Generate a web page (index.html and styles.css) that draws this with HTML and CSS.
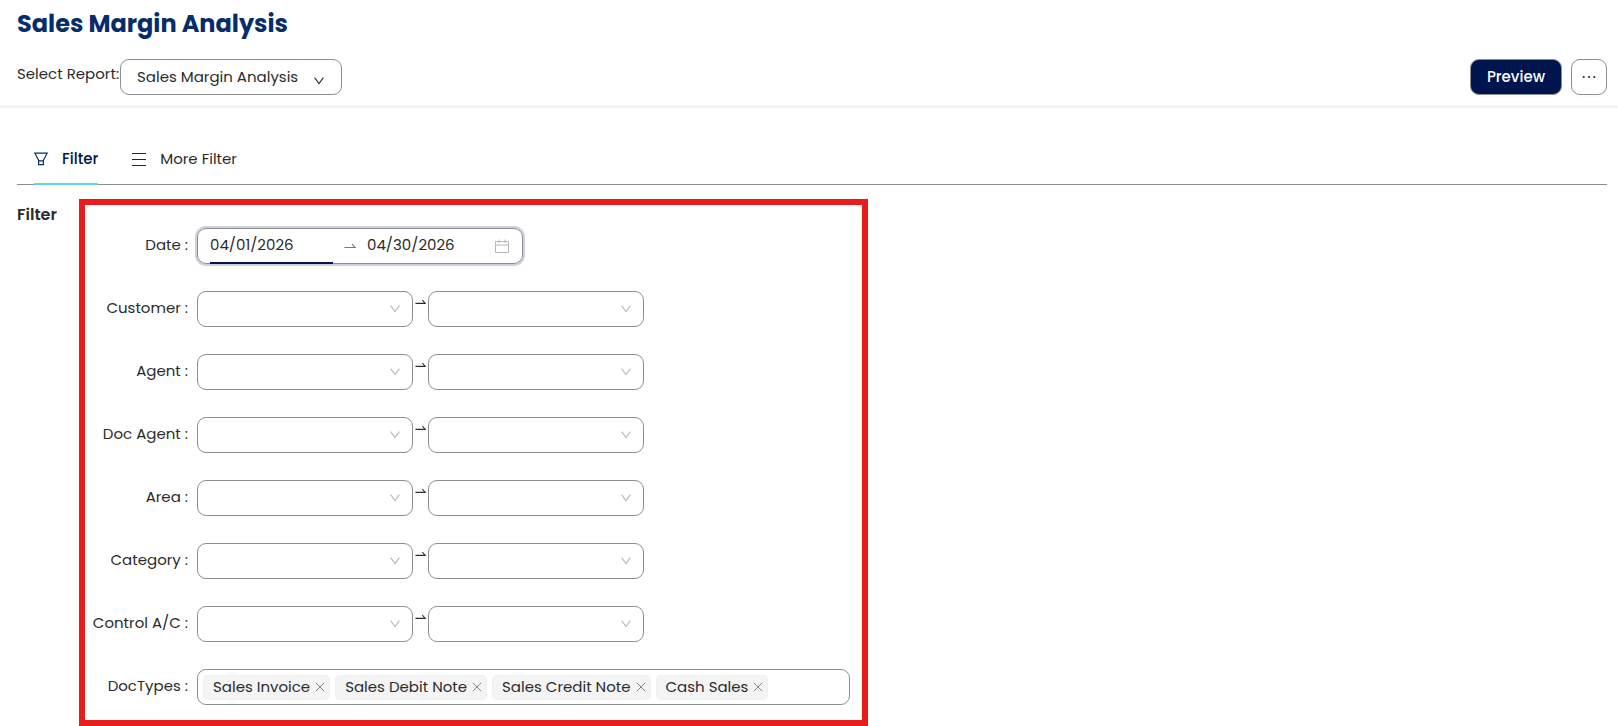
FILE: index.html
```html
<!DOCTYPE html>
<html lang="en">
<head>
<meta charset="utf-8">
<meta name="viewport" content="width=device-width, initial-scale=1">
<title>Sales Margin Analysis</title>
<link rel="stylesheet" href="styles.css">
</head>
<body>
<svg class="symbols" aria-hidden="true">
  <symbol id="chevron" viewBox="0 0 10 8"><path d="M.6.6 5 6.6 9.400.6" fill="none" stroke="currentColor" stroke-width="1.100"/></symbol>
  <symbol id="arrow" viewBox="0 0 12 6"><path d="M.5 4.500H11.200L8 1" fill="none" stroke="currentColor" stroke-width="1.100"/></symbol>
  <symbol id="cross" viewBox="0 0 10 10"><path d="M.8.8 9.200 9.200M9.200.8.8 9.200" fill="none" stroke="currentColor"/></symbol>
</svg>
<header class="header">
  <h1 class="title">Sales Margin Analysis</h1>
  <div class="toolbar">
    <label class="toolbar-label" for="report">Select Report:</label>
    <span class="select report">
      <select id="report"><option>Sales Margin Analysis</option></select>
      <svg class="chevron"><use href="#chevron"/></svg>
    </span>
    <div class="actions">
      <button class="btn btn-primary" type="button">Preview</button>
      <button class="btn btn-more" type="button" aria-label="More actions">
        <svg width="14" height="4" viewBox="0 0 14 4" fill="currentColor"><circle cx="1.700" cy="2" r="1.100"/><circle cx="7" cy="2" r="1.100"/><circle cx="12.300" cy="2" r="1.100"/></svg>
      </button>
    </div>
  </div>
</header>
<main class="main">
  <nav class="tabs">
    <a class="tab tab-active" href="#filter">
      <svg width="14" height="14" viewBox="0 0 14 14" fill="none" stroke="currentColor" stroke-width="1.200"><path d="M.9 1.200H13.100L9.400 8.300V12.700H4.600V8.300ZM4.600 8.900H9.400"/></svg>
      Filter
    </a>
    <a class="tab" href="#more">
      <svg width="14" height="14" viewBox="0 0 14 14" stroke="currentColor" stroke-width="1.200"><path d="M0 1.500H14M0 7.500H14M0 13.500H14"/></svg>
      More Filter
    </a>
  </nav>
  <section class="section" id="filter">
    <h2 class="section-title">Filter</h2>
    <form class="form">
      <div class="row">
        <label class="label" for="date-from">Date :</label>
        <div class="range">
          <input class="range-input range-active" id="date-from" type="text" value="04/01/2026">
          <svg class="arrow"><use href="#arrow"/></svg>
          <input class="range-input" type="text" value="04/30/2026" aria-label="Date to">
          <svg class="calendar" viewBox="0 0 14 14" fill="none" stroke="currentColor"><path d="M.5 2.500H13.500V13.500H.5ZM.5 6H13.500M4 .5V4M10 .5V4"/></svg>
        </div>
      </div>
      <div class="row">
        <label class="label" for="customer">Customer :</label>
        <div class="pair">
          <span class="select"><select id="customer"><option></option></select><svg class="chevron"><use href="#chevron"/></svg></span>
          <svg class="arrow"><use href="#arrow"/></svg>
          <span class="select"><select aria-label="Customer to"><option></option></select><svg class="chevron"><use href="#chevron"/></svg></span>
        </div>
      </div>
      <div class="row">
        <label class="label" for="agent">Agent :</label>
        <div class="pair">
          <span class="select"><select id="agent"><option></option></select><svg class="chevron"><use href="#chevron"/></svg></span>
          <svg class="arrow"><use href="#arrow"/></svg>
          <span class="select"><select aria-label="Agent to"><option></option></select><svg class="chevron"><use href="#chevron"/></svg></span>
        </div>
      </div>
      <div class="row">
        <label class="label" for="doc-agent">Doc Agent :</label>
        <div class="pair">
          <span class="select"><select id="doc-agent"><option></option></select><svg class="chevron"><use href="#chevron"/></svg></span>
          <svg class="arrow"><use href="#arrow"/></svg>
          <span class="select"><select aria-label="Doc Agent to"><option></option></select><svg class="chevron"><use href="#chevron"/></svg></span>
        </div>
      </div>
      <div class="row">
        <label class="label" for="area">Area :</label>
        <div class="pair">
          <span class="select"><select id="area"><option></option></select><svg class="chevron"><use href="#chevron"/></svg></span>
          <svg class="arrow"><use href="#arrow"/></svg>
          <span class="select"><select aria-label="Area to"><option></option></select><svg class="chevron"><use href="#chevron"/></svg></span>
        </div>
      </div>
      <div class="row">
        <label class="label" for="category">Category :</label>
        <div class="pair">
          <span class="select"><select id="category"><option></option></select><svg class="chevron"><use href="#chevron"/></svg></span>
          <svg class="arrow"><use href="#arrow"/></svg>
          <span class="select"><select aria-label="Category to"><option></option></select><svg class="chevron"><use href="#chevron"/></svg></span>
        </div>
      </div>
      <div class="row">
        <label class="label" for="control">Control A/C :</label>
        <div class="pair">
          <span class="select"><select id="control"><option></option></select><svg class="chevron"><use href="#chevron"/></svg></span>
          <svg class="arrow"><use href="#arrow"/></svg>
          <span class="select"><select aria-label="Control A/C to"><option></option></select><svg class="chevron"><use href="#chevron"/></svg></span>
        </div>
      </div>
      <div class="row">
        <label class="label" for="doctypes">DocTypes :</label>
        <div class="tags">
          <span class="tag">Sales Invoice<button class="tag-remove" type="button" aria-label="Remove Sales Invoice"><svg><use href="#cross"/></svg></button></span>
          <span class="tag">Sales Debit Note<button class="tag-remove" type="button" aria-label="Remove Sales Debit Note"><svg><use href="#cross"/></svg></button></span>
          <span class="tag">Sales Credit Note<button class="tag-remove" type="button" aria-label="Remove Sales Credit Note"><svg><use href="#cross"/></svg></button></span>
          <span class="tag">Cash Sales<button class="tag-remove" type="button" aria-label="Remove Cash Sales"><svg><use href="#cross"/></svg></button></span>
          <input class="tags-input" id="doctypes" type="text">
        </div>
      </div>
    </form>
  </section>
</main>
</body>
</html>
```

FILE: styles.css
```css
* {
  box-sizing: border-box;
}

body {
  margin: 0;
  background: #fff;
  color: #2b2b2b;
  font: 15px/24px Poppins, Inter, sans-serif;
}

input,
select,
button {
  margin: 0;
  color: inherit;
  font: inherit;
}

svg {
  display: block;
  flex: none;
}

.symbols {
  position: absolute;
  width: 0;
  height: 0;
}

.header {
  padding: 8px 11px 10px 17px;
  border-bottom: 3px solid #f3f3f3;
}

.title {
  margin: 0 0 19px;
  color: #062d6b;
  font-size: 24px;
  line-height: 32px;
  font-weight: 700;
}

.toolbar {
  display: flex;
  align-items: center;
}

.toolbar-label {
  width: 103px;
  padding-bottom: 6px;
  white-space: nowrap;
}

.select {
  display: grid;
  width: 216px;
  color: #b8b8b8;
}

.select select {
  grid-area: 1 / 1;
  width: 100%;
  height: 36px;
  padding: 0 36px 0 16px;
  border: 1px solid #8f8f8f;
  border-radius: 9px;
  background: #fff;
  color: #2b2b2b;
  appearance: none;
}

.chevron {
  grid-area: 1 / 1;
  place-self: center end;
  width: 10px;
  height: 8px;
  margin-right: 13px;
  pointer-events: none;
}

.report {
  width: 222px;
  color: #2b2b2b;
}

.report .chevron {
  margin: 8px 18px 0 0;
}

.actions {
  display: flex;
  gap: 9px;
  margin-left: auto;
}

.btn {
  display: flex;
  align-items: center;
  justify-content: center;
  height: 36px;
  padding: 0;
  border: 1px solid #8f8f8f;
  border-radius: 9px;
  background: #fff;
  box-shadow: 0 2px 0 #00000005;
}

.btn-primary {
  width: 92px;
  background: #00154d;
  color: #fff;
  font-weight: 500;
}

.btn-more {
  width: 36px;
}

.main {
  padding: 27px 11px 0 17px;
}

.tabs {
  display: flex;
  gap: 34px;
  padding-left: 17px;
  border-bottom: 1px solid #8f8f8f;
}

.tab {
  display: flex;
  align-items: center;
  gap: 14px;
  height: 50px;
  margin-bottom: -1px;
  border-bottom: 2px solid transparent;
  color: #2b2b2b;
  text-decoration: none;
}

.tab svg {
  color: #062d6b;
}

.tab-active {
  border-color: #5fd3f3;
  color: #00154d;
  font-weight: 500;
}

.section {
  display: flex;
  align-items: flex-start;
  padding-top: 14px;
}

.section-title {
  width: 62px;
  margin: 4px 0 0;
  font-size: 16px;
  line-height: 24px;
  font-weight: 600;
}

.form {
  display: grid;
  grid-template-columns: minmax(0, 1fr);
  gap: 27px;
  flex: 0 1 789px;
  padding: 23px 12px 15px 7px;
  border: 6px solid #e81c1c;
}

.row {
  display: grid;
  grid-template-columns: 96px minmax(0, 1fr);
  align-items: center;
  gap: 9px;
}

.label {
  padding-bottom: 2px;
  text-align: right;
  white-space: nowrap;
}

.pair {
  display: flex;
}

.pair .arrow {
  width: 11px;
  margin: 8px 2px 0;
}

.arrow {
  width: 12px;
  height: 6px;
}

.range {
  display: flex;
  align-items: center;
  width: 326px;
  height: 36px;
  padding: 0 13px 0 12px;
  border: 1px solid #8f8f8f;
  border-radius: 9px;
  box-shadow: 0 0 0 2px #ccd0dd;
}

.range .arrow {
  margin: 0 11px;
  color: #777;
}

.range-input {
  width: 123px;
  height: 36px;
  padding: 0 0 1px;
  border: 0;
  border-bottom: 2px solid transparent;
  outline: 0;
  background: none;
}

.range-active {
  border-color: #00154d;
}

.calendar {
  width: 14px;
  height: 14px;
  margin-left: auto;
  color: #b8b8b8;
}

.tags {
  display: flex;
  align-items: center;
  gap: 5px;
  height: 36px;
  padding: 0 5px;
  border: 1px solid #8f8f8f;
  border-radius: 9px;
}

.tag {
  display: flex;
  align-items: center;
  gap: 5px;
  height: 25px;
  padding: 0 4px 0 9px;
  border: 1px solid #f0f0f0;
  border-radius: 5px;
  background: #f4f4f4;
  line-height: 22px;
  white-space: nowrap;
}

.tag-remove {
  padding: 0;
  border: 0;
  background: none;
  color: #858585;
}

.tag-remove svg {
  width: 10px;
  height: 10px;
}

.tags-input {
  flex: 1;
  width: 0;
  border: 0;
  outline: 0;
  background: none;
}
```
